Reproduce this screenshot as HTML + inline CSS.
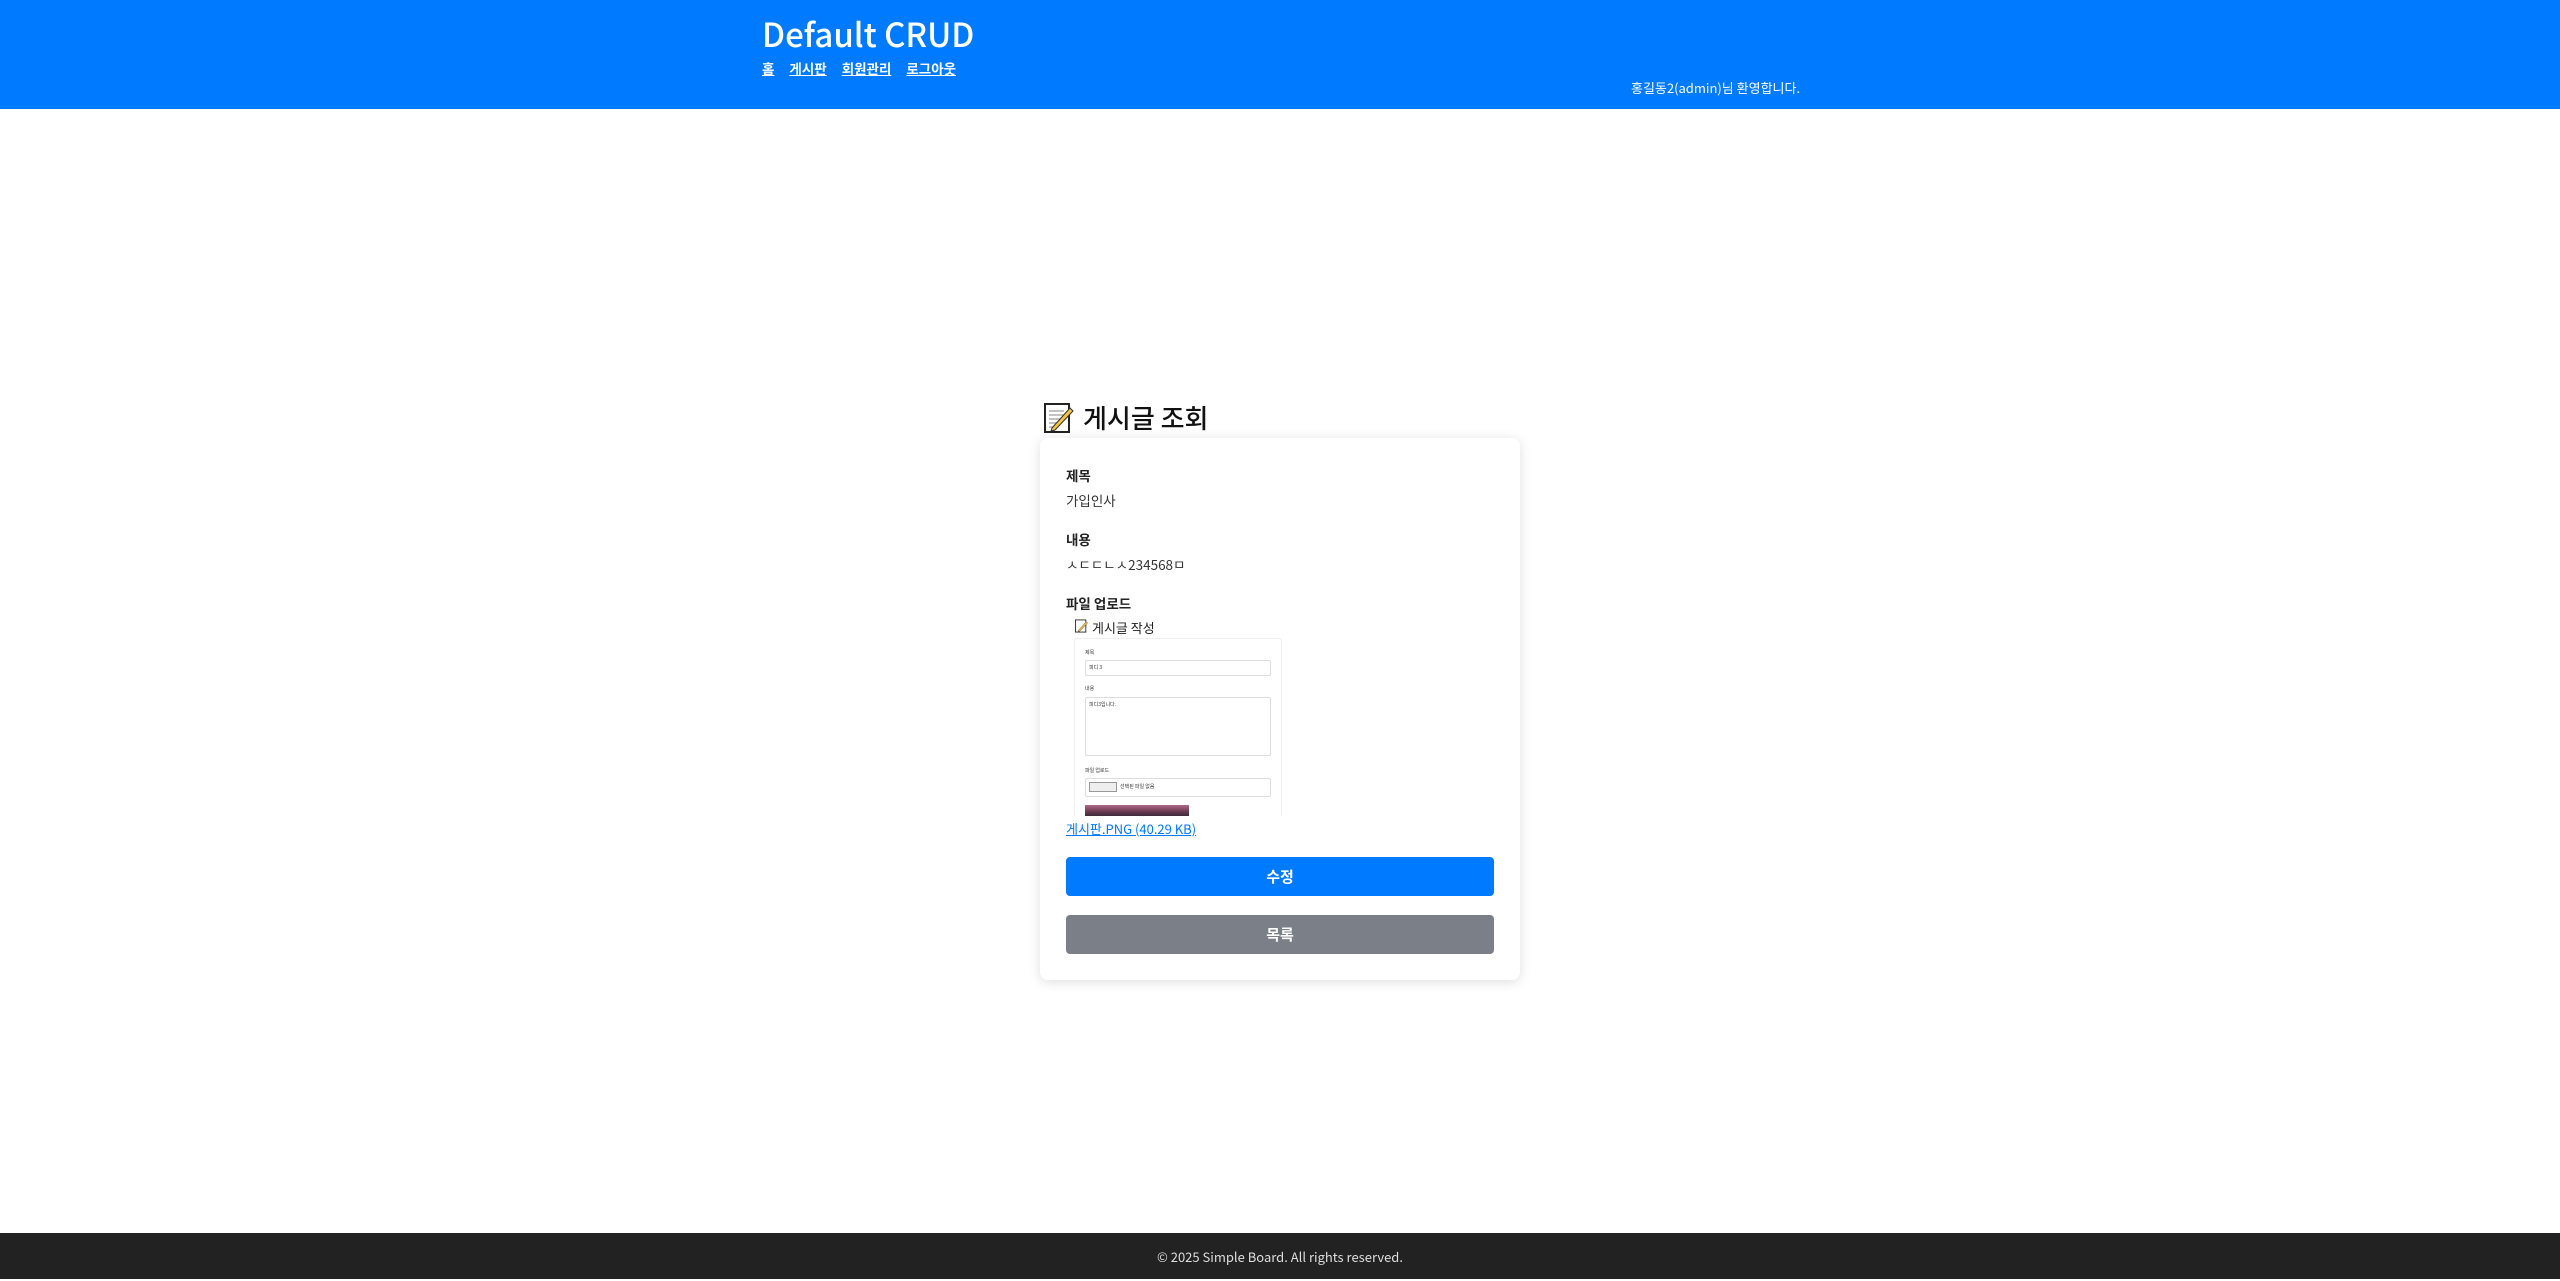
<!DOCTYPE html>
<html><head><meta charset="utf-8"><style>
*{box-sizing:border-box;margin:0;padding:0}
body{width:2560px;height:1279px;background:#fff;font-family:"Liberation Sans","Noto Sans CJK KR",sans-serif;position:relative;overflow:hidden;color:#212529}
.kr{font-family:"Noto Sans CJK KR",sans-serif}
header{position:absolute;left:0;top:0;width:2560px;height:109px;background:#007bff;color:#fff}
.t{position:absolute;left:762px;top:9px;font-size:33px;font-weight:500;font-family:"Noto Sans CJK KR",sans-serif;white-space:nowrap}
.nav{position:absolute;left:762px;top:58px;font-size:13.5px;font-weight:bold;font-family:"Noto Sans CJK KR",sans-serif}
.nav a{color:#fff;text-decoration:underline;margin-right:15px}
.wel{position:absolute;left:1631px;top:78px;font-size:13px;font-family:"Noto Sans CJK KR",sans-serif}
.ab{position:absolute;white-space:nowrap}
.card{position:absolute;left:1040px;top:438px;width:480px;height:542px;background:#fff;border-radius:8px;box-shadow:0 2px 12px rgba(0,0,0,.13)}
.lbl{font-weight:bold;font-size:13.5px;font-family:"Noto Sans CJK KR",sans-serif;color:#222}
.val{font-size:13.5px;font-family:"Noto Sans CJK KR",sans-serif;color:#333}
.btn{position:absolute;left:1066px;width:428px;height:39px;border-radius:4px;color:#fff;font-weight:bold;font-size:15px;text-align:center;line-height:39px;font-family:"Noto Sans CJK KR",sans-serif}
footer{position:absolute;left:0;top:1233px;width:2560px;height:46px;background:#222;color:#ddd;font-size:13px;text-align:center;line-height:48px;font-family:"Noto Sans CJK KR",sans-serif}
.mini{font-size:5px;font-family:"Noto Sans CJK KR",sans-serif;color:#333}
</style></head><body>
<header>
<div class="t">Default CRUD</div>
<div class="nav"><a>홈</a><a>게시판</a><a>회원관리</a><a>로그아웃</a></div>
<div class="wel">홍길동2(admin)님 환영합니다.</div>
</header>

<svg class="ab" style="left:1044px;top:403px" width="30" height="30" viewBox="0 0 30 30"><rect x="1" y="1" width="24" height="28" fill="#fff" stroke="#222" stroke-width="2"/><g stroke="#999" stroke-width="1.2"><line x1="5" y1="8" x2="20" y2="8"/><line x1="5" y1="12" x2="20" y2="12"/><line x1="5" y1="16" x2="18" y2="16"/><line x1="5" y1="20" x2="14" y2="20"/><line x1="5" y1="24" x2="12" y2="24"/></g><path d="M8 25 L26 5 L29 8 L11 27 L7 28 Z" fill="#f5c33b" stroke="#333" stroke-width="1"/></svg>
<div class="ab kr" style="left:1083px;top:399px;font-size:26px;font-weight:500;color:#111">게시글 조회</div>

<div class="card"></div>
<div class="ab lbl" style="left:1066px;top:465px">제목</div>
<div class="ab val" style="left:1066px;top:490px">가입인사</div>
<div class="ab lbl" style="left:1066px;top:529px">내용</div>
<div class="ab val" style="left:1066px;top:554px">ㅅㄷㄷㄴㅅ234568ㅁ</div>
<div class="ab lbl" style="left:1066px;top:593px">파일 업로드</div>

<svg class="ab" style="left:1075px;top:619px" width="13" height="14" viewBox="0 0 30 30"><rect x="1" y="1" width="24" height="28" fill="#fff" stroke="#222" stroke-width="2"/><path d="M8 25 L26 5 L29 8 L11 27 L7 28 Z" fill="#f5c33b" stroke="#333"/></svg>
<div class="ab kr" style="left:1092px;top:618px;font-size:13px;color:#222">게시글 작성</div>
<div class="ab" style="left:1074px;top:638px;width:208px;height:178px;border:1px solid #eee;border-bottom:none;border-radius:3px 3px 0 0"></div>
<div class="ab mini" style="left:1085px;top:649px">제목</div>
<div class="ab" style="left:1085px;top:660px;width:186px;height:16px;border:1px solid #ddd;border-radius:2px"></div>
<div class="ab mini" style="left:1089px;top:664px">피디 3</div>
<div class="ab mini" style="left:1085px;top:685px">내용</div>
<div class="ab" style="left:1085px;top:697px;width:186px;height:59px;border:1px solid #ddd;border-radius:2px"></div>
<div class="ab mini" style="left:1089px;top:701px">피디3입니다.</div>
<div class="ab mini" style="left:1085px;top:767px">파일 업로드</div>
<div class="ab" style="left:1085px;top:778px;width:186px;height:19px;border:1px solid #ddd;border-radius:2px"></div>
<div class="ab" style="left:1089px;top:782px;width:28px;height:10px;border:1px solid #999;background:#eee"></div>
<div class="ab mini" style="left:1120px;top:783px">선택된 파일 없음</div>
<div class="ab" style="left:1085px;top:805px;width:104px;height:11px;background:linear-gradient(#b06a8a,#6a3a50 60%,#3a2a3a)"></div>

<div class="ab kr" style="left:1066px;top:819px;font-size:13px;color:#007bff;text-decoration:underline">게시판.PNG (40.29 KB)</div>
<div class="btn" style="top:857px;background:#007bff">수정</div>
<div class="btn" style="top:915px;background:#7b7f88">목록</div>

<footer>© 2025 Simple Board. All rights reserved.</footer>
</body></html>
